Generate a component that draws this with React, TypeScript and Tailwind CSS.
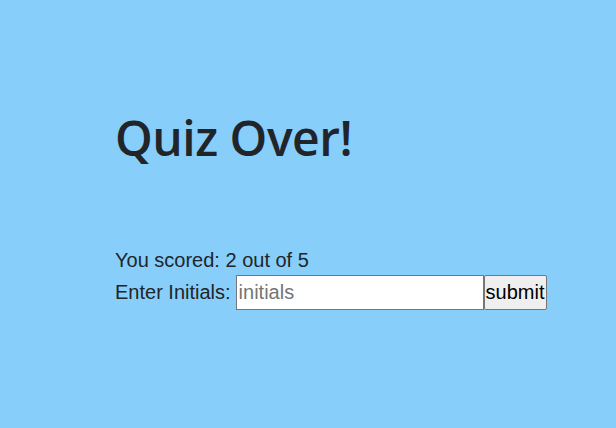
export default function App() {
  return (
    <div className="min-h-[428px] w-full bg-[#87cefa] text-[#212529] font-['Liberation_Sans',Arial,sans-serif]">
      <div className="pl-[115px] pt-[109px]">
        <h1 className="font-['Open_Sans',sans-serif] text-[48px] font-semibold leading-[1.2] tracking-[-0.5px]">
          Quiz Over!
        </h1>
        <div className="mt-[81px] text-[20px] leading-[24px]">
          <p>You scored: 2 out of 5</p>
          <div className="mt-[3px] flex items-center">
            <label htmlFor="initials" className="mr-[5px]">Enter Initials:</label>
            <input
              id="initials"
              placeholder="initials"
              className="h-[35px] w-[248px] border border-[#767676] bg-white px-[2px] text-[20px] placeholder:text-[#757575] outline-none"
            />
            <button className="h-[35px] border border-[#767676] bg-[#efefef] px-[1px] text-[20px] text-black rounded-[2px]">
              submit
            </button>
          </div>
        </div>
      </div>
    </div>
  );
}
